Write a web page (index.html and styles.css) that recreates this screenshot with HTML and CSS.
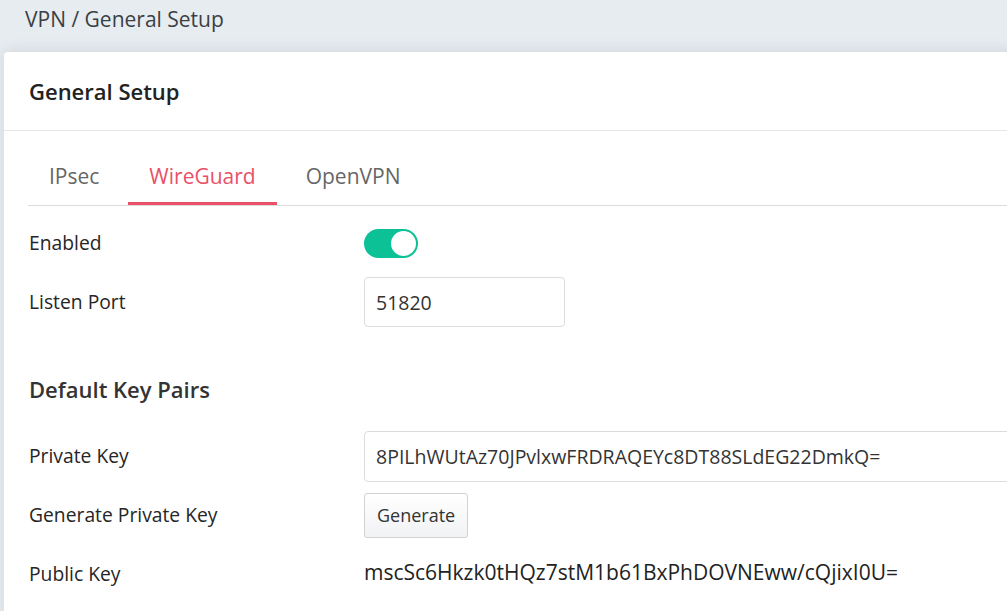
FILE: index.html
```
<!DOCTYPE html>
<html>

<head>
  <title>VPN / General Setup</title>
  <link rel="stylesheet" href="styles.css">
</head>

<body>
  <div class="breadcrumb">VPN / General Setup</div>

  <div class="card">
    <div class="card-header">General Setup</div>
    <div class="card-body">
      <ul class="tabs">
        <li>IPsec</li>
        <li class="active">WireGuard</li>
        <li>OpenVPN</li>
      </ul>

      <div class="form">
        <div class="row">
          <label>Enabled</label>
          <div class="switch on"><span class="knob"></span></div>
        </div>
        <div class="row">
          <label>Listen Port</label>
          <input type="text" class="input input-small" value="51820">
        </div>

        <h3 class="section-title">Default Key Pairs</h3>

        <div class="row">
          <label>Private Key</label>
          <input type="text" class="input input-wide" value="8PILhWUtAz70JPvlxwFRDRAQEYc8DT88SLdEG22DmkQ=">
        </div>
        <div class="row">
          <label>Generate Private Key</label>
          <button class="btn">Generate</button>
        </div>
        <div class="row">
          <label>Public Key</label>
          <span class="value">mscSc6Hkzk0tHQz7stM1b61BxPhDOVNEww/cQjixI0U=</span>
        </div>
      </div>
    </div>
  </div>
</body>

</html>
```

FILE: styles.css
```
html, body {
  margin: 0;
  height: 100%;
  overflow: hidden;
}

body {
  background-color: #e7ecf0;
  font-family: "Open Sans", "Liberation Sans", sans-serif;
  color: #333;
}

.breadcrumb {
  height: 52px;
  padding-left: 25px;
  line-height: 38px;
  font-size: 21px;
  color: #3a3f44;
}

.card {
  margin: 0 -60px 0 4px;
  background-color: #fff;
  border-radius: 4px 4px 0 0;
  box-shadow: 0 -2px 14px rgba(60, 80, 100, 0.12);
  height: 700px;
}

.card-header {
  height: 78px;
  line-height: 78px;
  padding: 0 25px;
  font-size: 22px;
  font-weight: 600;
  color: #222;
  border-bottom: 1px solid #e6e6e6;
}

.card-body {
  padding-left: 24px;
}

.tabs {
  list-style: none;
  margin: 21px 0 0 0;
  padding: 0;
  display: flex;
  gap: 8px;
  border-bottom: 1px solid #dcdcdc;
}

.tabs li {
  padding: 0 21px 2px;
  line-height: 48px;
  font-size: 21px;
  color: #666;
  border-bottom: 3px solid transparent;
}

.tabs li.active {
  color: #ea5068;
  border-bottom-color: #ea5068;
}

.form {
  padding-top: 12px;
}

.row {
  display: flex;
  align-items: center;
  height: 50px;
  margin-bottom: 9px;
}

.row label {
  width: 335px;
  padding-left: 1px;
  margin-top: -2px;
  font-size: 19.3px;
  color: #262626;
}

.switch {
  width: 54px;
  height: 29px;
  border-radius: 15px;
  background-color: #ccc;
  display: flex;
  align-items: center;
  justify-content: flex-start;
  padding: 0 2px;
  box-sizing: border-box;
}

.switch.on {
  background-color: #0dc196;
  justify-content: flex-end;
}

.switch .knob {
  width: 25px;
  height: 25px;
  border-radius: 50%;
  background-color: #fff;
}

.input {
  height: 50px;
  box-sizing: border-box;
  border: 1px solid #dcdcdc;
  border-radius: 4px;
  padding: 0 11px;
  font-family: inherit;
  font-size: 19.5px;
  color: #333;
  background-color: #fff;
}

.input-small {
  width: 201px;
}

.input-wide {
  width: 700px;
  height: 51px;
}

.section-title {
  margin: 48px 0 26px;
  padding-left: 1px;
  height: 30px;
  line-height: 28px;
  font-size: 22px;
  font-weight: 600;
  color: #333;
}

.btn {
  height: 45px;
  padding: 0 12px;
  border: 1px solid #d2d2d2;
  border-radius: 3px;
  background: linear-gradient(#fff, #f1f2f4);
  font-family: inherit;
  font-size: 18px;
  color: #333;
  cursor: pointer;
}

.value {
  font-size: 21px;
  color: #222;
  margin-top: -4px;
}
```
